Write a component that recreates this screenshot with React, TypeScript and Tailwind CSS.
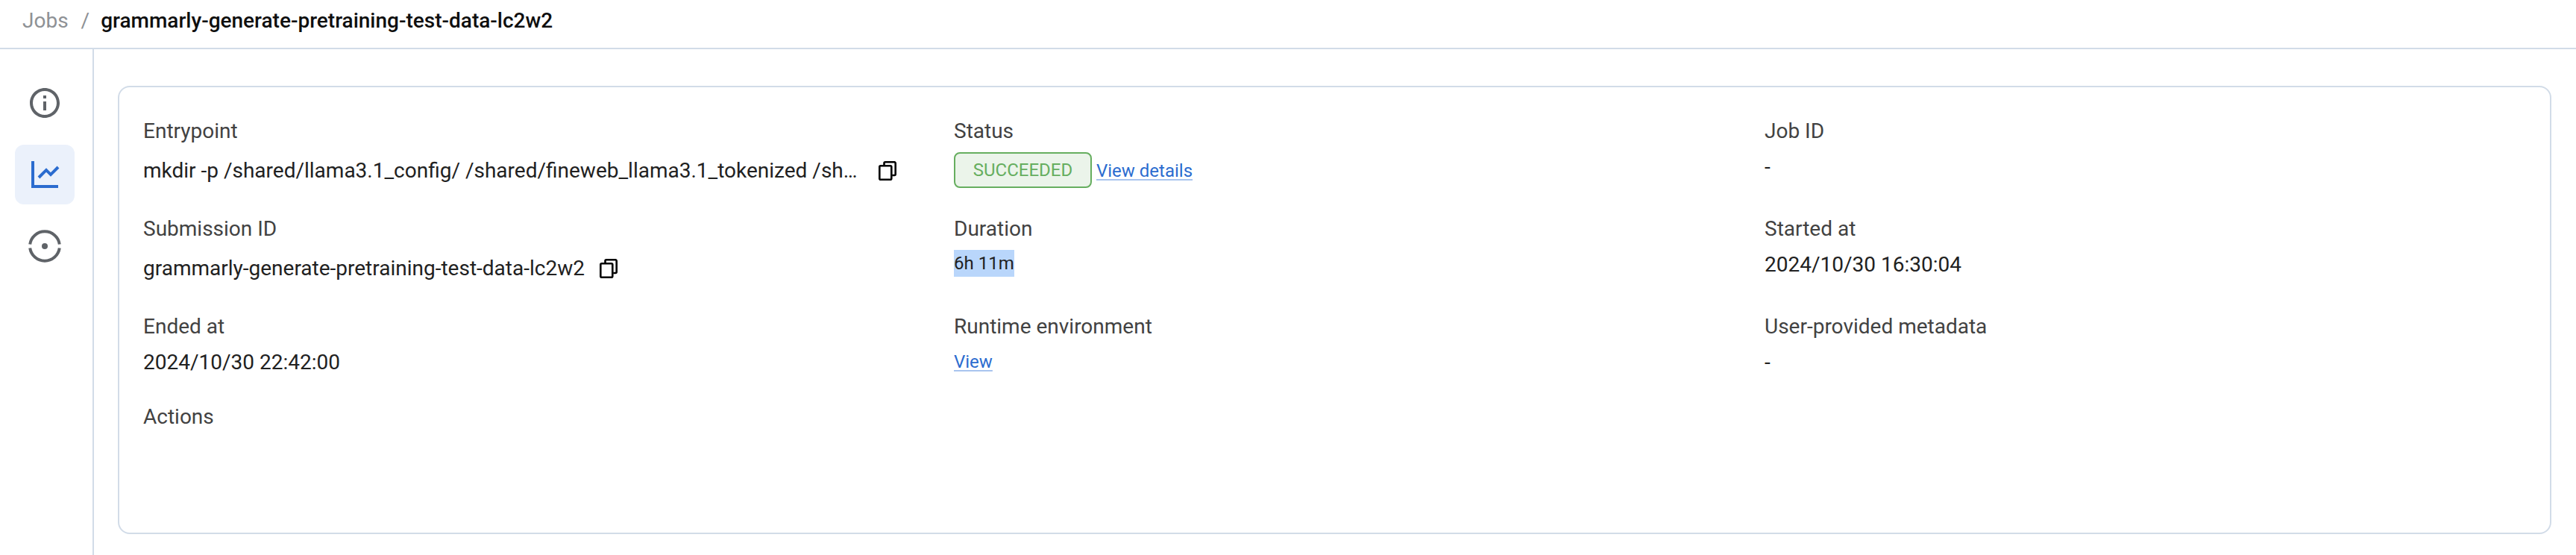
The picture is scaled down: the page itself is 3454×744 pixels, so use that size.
import React from "react";
import { RiInformationLine, RiLineChartLine } from "react-icons/ri";

const Label = ({ children }: { children: React.ReactNode }) => (
  <div className="mb-[9px] h-[40px] pt-[1px] text-[28px] leading-[40px] text-[#424242]">{children}</div>
);

const Copy = () => (
  <svg width="24" height="26" viewBox="0 0 24 26" fill="none" className="shrink-0" stroke="#000" strokeWidth="2.6">
    <rect x="1.3" y="6.3" width="16" height="18.4" rx="1.5" />
    <path d="M7.5 5.5V2.8a1.5 1.5 0 0 1 1.5-1.5h12a1.5 1.5 0 0 1 1.7 1.5v14.7a1.5 1.5 0 0 1-1.5 1.5h-3" />
  </svg>
);

const Link = ({ children }: { children: React.ReactNode }) => (
  <span className="text-[24px] leading-[32px] text-[#2B6CCF] underline decoration-[#A9C4EE] decoration-2 underline-offset-[3px]">
    {children}
  </span>
);

const Value = ({ children }: { children: React.ReactNode }) => (
  <div className="text-[28px] leading-[40px] text-[#212121]">{children}</div>
);

const SideTile = ({ active, children }: { active?: boolean; children: React.ReactNode }) => (
  <div className={`flex h-[80px] w-[80px] items-center justify-center rounded-[12px] ${active ? "bg-[#EBF1FB] text-[#2B6CCF]" : "text-[#5F6368]"}`}>
    {children}
  </div>
);

export default function App() {
  return (
    <div className="flex h-[744px] flex-col overflow-hidden bg-white font-['Roboto',sans-serif]">
      <header className="flex h-[66px] shrink-0 items-start border-b-2 border-[#D2DCE8] pl-[30px] pt-[8px] text-[28px] leading-[40px]">
        <span className="text-[#8E9195]">Jobs</span>
        <span className="ml-[17px] mr-[15px] text-[#8E9195]">/</span>
        <span className="font-medium text-[#0F0F0F]">grammarly-generate-pretraining-test-data-lc2w2</span>
      </header>
      <div className="flex min-h-0 flex-1">
        <aside className="flex w-[126px] shrink-0 flex-col items-center gap-[16px] border-r-2 border-[#D2DCE8] pr-[4px] pt-[32px]">
          <SideTile>
            <RiInformationLine size={48} />
          </SideTile>
          <SideTile active>
            <RiLineChartLine size={48} />
          </SideTile>
          <SideTile>
            <svg width="48" height="48" viewBox="0 0 48 48" fill="none" stroke="currentColor" strokeWidth="4">
              <path d="M4.2 21.5A20 20 0 0 1 43.8 21.5" />
              <path d="M4.2 26.5A20 20 0 0 0 43.8 26.5" />
              <circle cx="24" cy="24" r="4" fill="currentColor" stroke="none" />
            </svg>
          </SideTile>
        </aside>
        <main className="min-w-0 flex-1 pl-[32px] pr-[33px] pt-[49px]">
          <section className="h-[601px] rounded-[16px] border-2 border-[#D2DCE8] px-[32px] pt-[38px]">
            <div className="grid grid-cols-3 gap-x-[66px] gap-y-[32px]">
              <div className="h-[99px]">
                <Label>Entrypoint</Label>
                <div className="flex h-[50px] items-center gap-[22px] text-[28px] text-[#212121]">
                  <span className="w-[964px] whitespace-nowrap leading-[40px]">
                    mkdir -p /shared/llama3.1_config/ /shared/fineweb_llama3.1_tokenized /sh…
                  </span>
                  <Copy />
                </div>
              </div>
              <div className="h-[99px]">
                <Label>Status</Label>
                <div className="flex items-start gap-[6px]">
                  <span className="flex h-[48px] w-[185px] items-center justify-center rounded-[8px] border-2 border-[#66AE5F] bg-[#EBF4EA] text-[24px] text-[#66AE5F]">
                    SUCCEEDED
                  </span>
                  <span className="mt-[9px] block">
                    <Link>View details</Link>
                  </span>
                </div>
              </div>
              <div>
                <Label>Job ID</Label>
                <Value>-</Value>
              </div>

              <div className="h-[99px]">
                <Label>Submission ID</Label>
                <div className="flex h-[50px] items-center gap-[20px] text-[28px] leading-[40px] text-[#212121]">
                  <span>grammarly-generate-pretraining-test-data-lc2w2</span>
                  <Copy />
                </div>
              </div>
              <div>
                <Label>Duration</Label>
                <span className="inline-block h-[36px] bg-[#B9D6FB] text-[24px] leading-[36px] text-[#212121]">6h 11m</span>
              </div>
              <div>
                <Label>Started at</Label>
                <Value>2024/10/30 16:30:04</Value>
              </div>

              <div className="h-[89px]">
                <Label>Ended at</Label>
                <Value>2024/10/30 22:42:00</Value>
              </div>
              <div>
                <Label>Runtime environment</Label>
                <div className="pt-[3px]">
                  <Link>View</Link>
                </div>
              </div>
              <div>
                <Label>User-provided metadata</Label>
                <Value>-</Value>
              </div>

              <div>
                <Label>Actions</Label>
              </div>
            </div>
          </section>
        </main>
      </div>
    </div>
  );
}
